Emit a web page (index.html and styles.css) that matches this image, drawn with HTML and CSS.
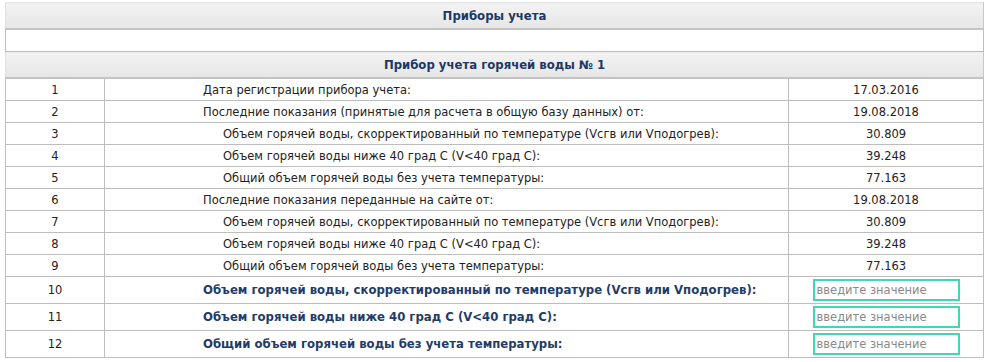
FILE: index.html
```html
<!DOCTYPE html>
<html lang="ru">
<head>
<meta charset="utf-8">
<title>Приборы учета</title>
<link rel="stylesheet" href="styles.css">
</head>
<body>
<table class="meters">
  <colgroup>
    <col class="c-num">
    <col class="c-label">
    <col class="c-val">
  </colgroup>
  <tr class="head"><th colspan="3">Приборы учета</th></tr>
  <tr class="blank"><td colspan="3"></td></tr>
  <tr class="head"><th colspan="3">Прибор учета горячей воды № 1</th></tr>
  <tr><td class="num">1</td><td class="label">Дата регистрации прибора учета:</td><td class="val">17.03.2016</td></tr>
  <tr><td class="num">2</td><td class="label">Последние показания (принятые для расчета в общую базу данных) от:</td><td class="val">19.08.2018</td></tr>
  <tr><td class="num">3</td><td class="label sub">Объем горячей воды, скорректированный по температуре (Vсгв или Vподогрев):</td><td class="val">30.809</td></tr>
  <tr><td class="num">4</td><td class="label sub">Объем горячей воды ниже 40 град С (V&lt;40 град С):</td><td class="val">39.248</td></tr>
  <tr><td class="num">5</td><td class="label sub">Общий объем горячей воды без учета температуры:</td><td class="val">77.163</td></tr>
  <tr><td class="num">6</td><td class="label">Последние показания переданные на сайте от:</td><td class="val">19.08.2018</td></tr>
  <tr><td class="num">7</td><td class="label sub">Объем горячей воды, скорректированный по температуре (Vсгв или Vподогрев):</td><td class="val">30.809</td></tr>
  <tr><td class="num">8</td><td class="label sub">Объем горячей воды ниже 40 град С (V&lt;40 град С):</td><td class="val">39.248</td></tr>
  <tr><td class="num">9</td><td class="label sub">Общий объем горячей воды без учета температуры:</td><td class="val">77.163</td></tr>
  <tr class="entry"><td class="num">10</td><td class="label strong">Объем горячей воды, скорректированный по температуре (Vсгв или Vподогрев):</td><td class="val"><input class="field" type="text" placeholder="введите значение"></td></tr>
  <tr class="entry"><td class="num">11</td><td class="label strong">Объем горячей воды ниже 40 град С (V&lt;40 град С):</td><td class="val"><input class="field" type="text" placeholder="введите значение"></td></tr>
  <tr class="entry"><td class="num">12</td><td class="label strong">Общий объем горячей воды без учета температуры:</td><td class="val"><input class="field" type="text" placeholder="введите значение"></td></tr>
</table>
</body>
</html>
```

FILE: styles.css
```css
html, body {
  margin: 0;
  padding: 0;
  background: #ffffff;
}
body {
  padding: 2px 0 0 5px;
  font-family: "DejaVu Sans", Verdana, sans-serif;
  font-size: 11.5px;
  color: #222222;
}
.meters {
  width: 978px;
  border-collapse: collapse;
  table-layout: fixed;
}
.c-num { width: 99px; }
.c-label { width: 684px; }
.c-val { width: 195px; }
.meters td, .meters th {
  padding: 0;
  border: 1px solid #bdbdbd;
}
.head th {
  height: 25px;
  background: linear-gradient(#f3f3f3, #e6e6e6);
  border-left: 1px solid #e0e0e0;
  border-right: 1px solid #c8c8c8;
  border-top: 1px solid #e6e6e6;
  border-bottom: 2px solid #c4c4c4;
  color: #1c3866;
  font-weight: bold;
  font-size: 11.7px;
  text-align: center;
  vertical-align: middle;
}
.blank td {
  height: 19px;
  background: #ffffff;
}
.meters tr td {
  height: 21px;
}
.num {
  text-align: center;
}
.val {
  text-align: center;
}
.label {
  padding-left: 98px !important;
  text-align: left;
  white-space: nowrap;
}
.label.sub {
  padding-left: 118px !important;
}
.label.strong {
  font-weight: bold;
  font-size: 11.7px;
  color: #1f3c68;
}
.entry td {
  height: 26px !important;
}
.field {
  box-sizing: border-box;
  width: 147px;
  height: 22px;
  margin: 0;
  padding: 0 2px;
  border: 2px solid #3ed8b6;
  background: #ffffff;
  font-family: "DejaVu Sans", Verdana, sans-serif;
  font-size: 11.5px;
  color: #333333;
  vertical-align: middle;
}
.field::placeholder {
  color: #8a8a8a;
}
```
